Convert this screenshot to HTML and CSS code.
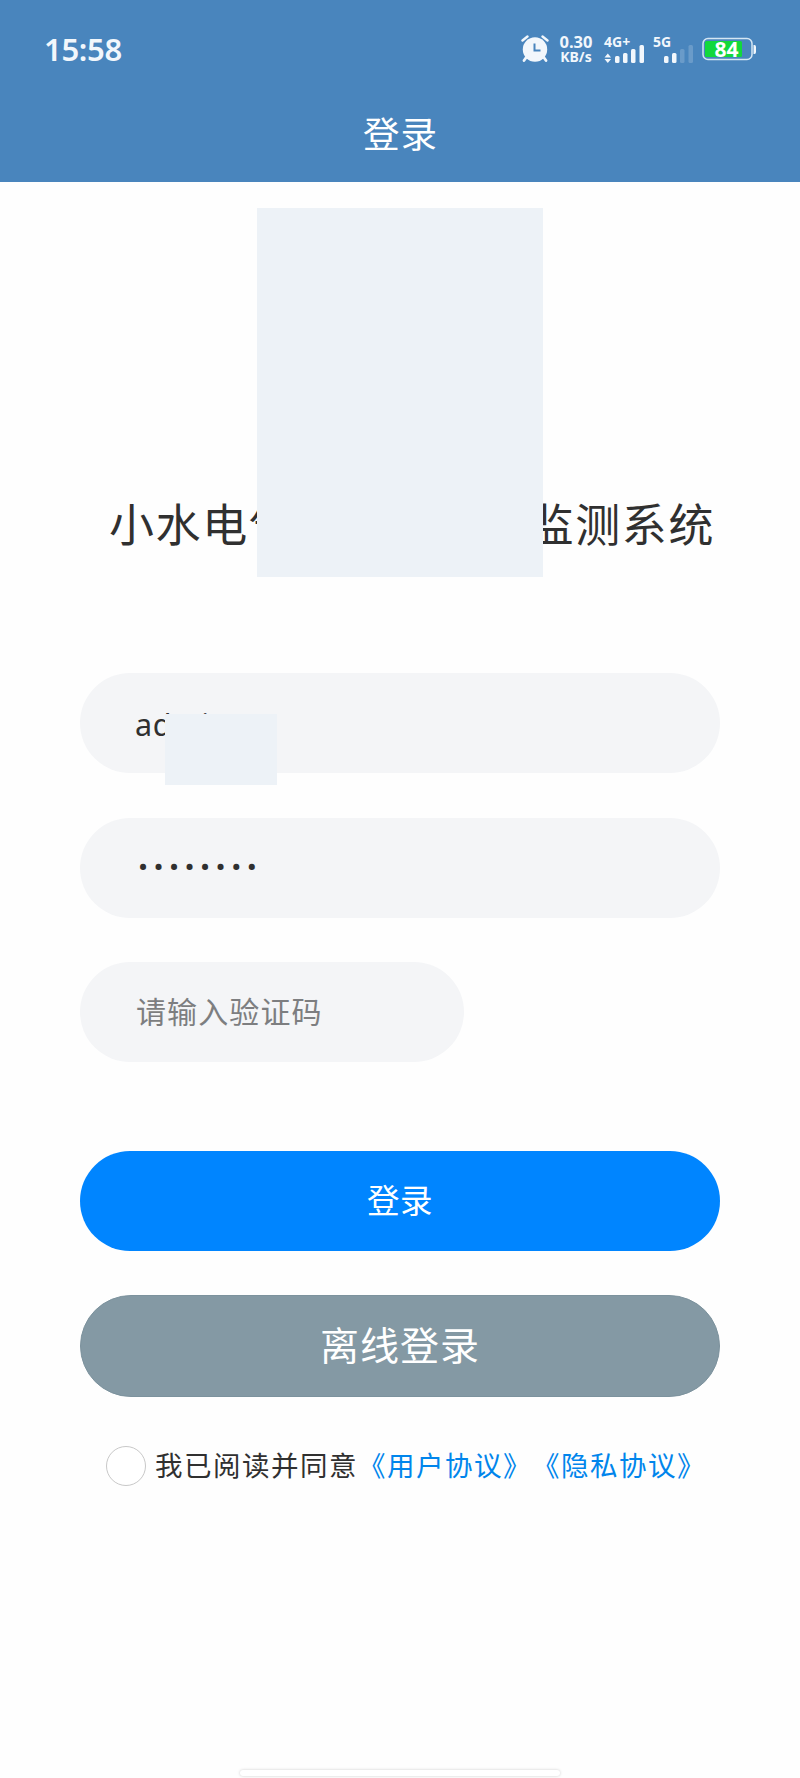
FILE: index.html
```html
<!DOCTYPE html>
<html lang="zh-CN">
<head>
<meta charset="utf-8">
<meta name="viewport" content="width=device-width,initial-scale=1.0"/>
<title>登录</title>
<link rel="stylesheet" href="styles.css">
</head>

<body>
<div class="page">
    <header class="header">
        <div class="status-bar">
            <span class="time">15:58</span>
            <div class="status-icons">
                <!-- 闹钟 -->
                <svg class="alarm" width="28" height="28" viewBox="0 0 28 28">
                    <g fill="none" stroke="#f2f7fc" stroke-linecap="round">
                        <path d="M1.5 5.5L6.5 1.5M21.5 1.5L26.5 5.5" stroke-width="2.4"/>
                        <path d="M5.5 22L3 25.5M22.5 22L25 25.5" stroke-width="2.8"/>
                    </g>
                    <circle cx="14" cy="14.5" r="12.2" fill="#f2f7fc"/>
                    <path d="M13.5 8.5V15.5H19.5" fill="none" stroke="#4985bd" stroke-width="2"/>
                </svg>
                <div class="speed">
                    <span class="speed-num">0.30</span>
                    <span class="speed-unit">KB/s</span>
                </div>
                <div class="signal">
                    <span class="net">4G+</span>
                    <svg width="42" height="18" viewBox="0 0 42 18">
                        <g fill="#f2f7fc">
                            <path d="M0.5 12.5L3.8 8.500L7.1 12.5ZM0.5 14L3.8 18L7.1 14Z"/>
                            <rect x="11" y="11" width="4.5" height="7" rx="1.5"/>
                            <rect x="19" y="8" width="4.5" height="10" rx="1.5"/>
                            <rect x="27" y="4" width="4.5" height="14" rx="1.5"/>
                            <rect x="35.5" y="0" width="4.5" height="18" rx="1.5"/>
                        </g>
                    </svg>
                </div>
                <div class="signal">
                    <span class="net">5G</span>
                    <svg width="42" height="18" viewBox="0 0 42 18">
                        <g fill="#f2f7fc">
                            <rect x="11" y="11" width="4.5" height="7" rx="1.5"/>
                            <rect x="19" y="8" width="4.5" height="10" rx="1.5"/>
                            <rect x="27" y="4" width="4.5" height="14" rx="1.5" opacity="0.2"/>
                            <rect x="35.5" y="0" width="4.5" height="18" rx="1.5" opacity="0.2"/>
                        </g>
                    </svg>
                </div>
                <div class="battery">
                    <svg width="54" height="24" viewBox="0 0 54 24">
                        <rect x="1" y="1.5" width="49" height="21" rx="5" fill="none" stroke="#d5e6f3" stroke-width="1.5"/>
                        <rect x="3" y="4" width="37" height="16" rx="1.5" fill="#12d83c"/>
                        <path d="M51.5 8H52.5Q54 8 54 10V15Q54 17 52.5 17H51.5Z" fill="#f2f7fc"/>
                    </svg>
                    <span class="battery-num">84</span>
                </div>
            </div>
        </div>
        <h1 class="nav-title">登录</h1>
    </header>

    <div class="banner">
        <h2 class="sys-name"><span>小水电气</span><span>监测系统</span></h2>
        <div class="banner-mask"></div>
    </div>

    <div class="form">
        <div class="field">
            <span class="value">admin</span>
            <div class="field-mask"></div>
        </div>
        <div class="field">
            <span class="value dots">••••••••</span>
        </div>
        <div class="field field-code">
            <span class="placeholder">请输入验证码</span>
        </div>
        <div class="btn btn-login">登录</div>
        <div class="btn btn-offline">离线登录</div>
    </div>

    <div class="agree">
        <i class="radio"></i>
        <p class="agree-text">我已阅读并同意<a class="link">《用户协议》</a><a class="link">《隐私协议》</a></p>
    </div>

    <div class="home-bar"></div>
</div>
</body>
</html>
```

FILE: styles.css
```css
*{padding:0;margin:0;box-sizing:border-box;}
body{
    background:#fefefe;
    color:#303030;
    font-family:"Noto Sans","Noto Sans CJK SC",sans-serif;
    text-spacing-trim:space-all;
}
.page{
    display:flex;
    flex-direction:column;
    width:800px;
    height:1778px;
    overflow:hidden;
}

/* 顶部 */
.header{
    height:182px;
    background:#4985bd;
    color:#fff;
}
.status-bar{
    display:flex;
    align-items:center;
    justify-content:space-between;
    height:98px;
    padding:0 44px 0 44px;
}
.time{
    font-size:31px;
    font-weight:600;
    letter-spacing:-0.3px;
    color:#f2f7fc;
}
.status-icons{
    display:flex;
    align-items:center;
}
.status-icons svg{display:block;}
.speed{
    display:flex;
    flex-direction:column;
    align-items:center;
    width:36px;
    margin:0 10px 0 9px;
    font-weight:700;
    color:#f2f7fc;
}
.speed-num{
    font-size:16.5px;
    line-height:15px;
}
.speed-unit{
    font-size:14px;
    line-height:15px;
}
.signal{
    position:relative;
    width:42px;
    height:29px;
    margin-right:7px;
    padding-top:10px;
}
.net{
    position:absolute;
    left:0;
    top:-3px;
    font-size:14px;
    font-weight:700;
    line-height:20px;
    color:#f2f7fc;
}
.battery{position:relative;}
.battery-num{
    position:absolute;
    left:0;
    top:-2px;
    width:49px;
    font-size:21px;
    font-weight:700;
    line-height:28px;
    text-align:center;
}
.nav-title{
    font-size:36.5px;
    font-weight:400;
    line-height:72px;
    letter-spacing:1px;
    text-indent:1px;
    text-align:center;
}

/* 系统名称 */
.banner{
    position:relative;
    height:491px;
    padding:309px 85px 0 109px;
}
.sys-name{
    display:flex;
    justify-content:space-between;
    font-size:45px;
    font-weight:400;
    line-height:68px;
    letter-spacing:1.6px;
}
.banner-mask{
    position:absolute;
    left:257px;
    top:26px;
    width:286px;
    height:369px;
    background:#edf2f7;
}

/* 表单 */
.form{
    display:flex;
    flex-direction:column;
    padding:0 80px;
}
.field{
    position:relative;
    display:flex;
    align-items:center;
    height:100px;
    margin-bottom:44.5px;
    padding-left:55px;
    border-radius:50px;
    background:#f4f5f7;
}
.field-code{
    width:384px;
    margin-bottom:89px;
}
.value{
    padding-top:1px;
    font-size:30.5px;
    letter-spacing:0.6px;
}
.dots{
    padding:0 0 0 3px;
    font-family:Roboto,sans-serif;
    font-size:30px;
    letter-spacing:5.4px;
}
.placeholder{
    padding:0 0 4px 1px;
    font-size:30px;
    letter-spacing:1.1px;
    color:#7d7e80;
}
.field-mask{
    position:absolute;
    left:85px;
    top:41px;
    width:112px;
    height:71px;
    background:#edf2f7;
}
.btn{
    display:flex;
    align-items:center;
    justify-content:center;
    height:100px;
    padding-bottom:4px;
    border-radius:50px;
    color:#fff;
}
.btn-login{
    margin-bottom:44px;
    font-size:32.5px;
    letter-spacing:0.6px;
    background:#0085ff;
}
.btn-offline{
    height:102px;
    padding-bottom:6px;
    border:1px solid #7c929d;
    border-radius:51px;
    font-size:39px;
    letter-spacing:1px;
    background:#8499a4;
}

/* 协议 */
.agree{
    display:flex;
    align-items:center;
    margin-top:49px;
    padding-left:106px;
}
.radio{
    width:40px;
    height:40px;
    margin-right:9px;
    border:1px solid #c8c8c8;
    border-radius:50%;
    background:#fff;
}
.agree-text{
    font-size:27.5px;
    line-height:40px;
    letter-spacing:1.5px;
    white-space:nowrap;
}
.link{color:#0085ec;}

.home-bar{
    width:320px;
    height:6px;
    margin:auto auto 2px;
    border-radius:3px;
    background:#fff;
    box-shadow:0 0 3px #ccc;
}
```
